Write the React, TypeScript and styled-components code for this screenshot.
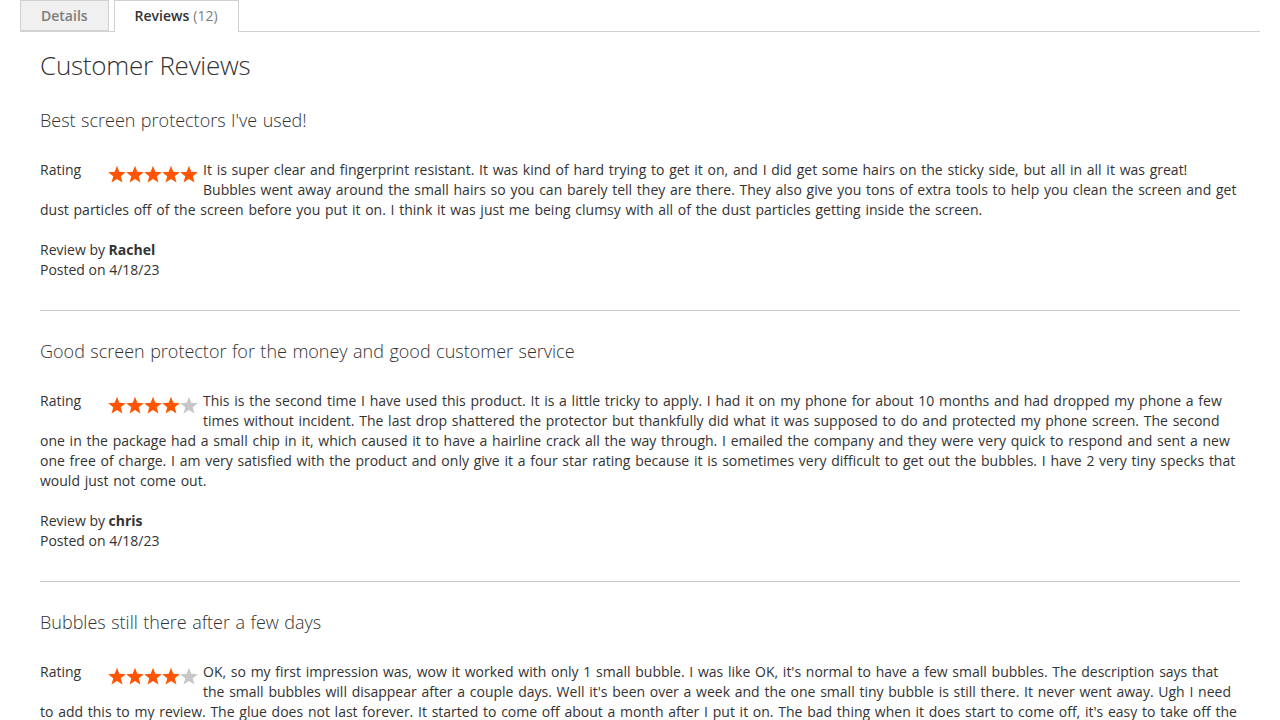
import React from "react";
import styled, { createGlobalStyle } from "styled-components";

const GlobalStyle = createGlobalStyle`
  html, body { margin: 0; padding: 0; background: #fff; }
  body {
    font-family: "Open Sans", "Helvetica Neue", Arial, sans-serif;
    font-size: 14px;
    line-height: 20px;
    color: #333;
  }
  * { box-sizing: border-box; }
`;

const Page = styled.div`
  width: 1280px;
  height: 720px;
  overflow: hidden;
`;

const TabBar = styled.div`
  display: flex;
  align-items: flex-end;
  gap: 5px;
  margin: 0 20px;
  height: 32px;
  border-bottom: 1px solid #d1d1d1;
`;

const Tab = styled.div<{ $active?: boolean }>`
  height: ${(p) => (p.$active ? "32px" : "31px")};
  margin-bottom: ${(p) => (p.$active ? "-1px" : "0")};
  padding: 0 20px;
  display: flex;
  align-items: center;
  padding-bottom: ${(p) => (p.$active ? "2px" : "0")};
  border: 1px solid #d1d1d1;
  border-bottom: ${(p) => (p.$active ? "none" : "1px solid #d1d1d1")};
  background: ${(p) => (p.$active ? "#fff" : "#f0f0f0")};
  color: ${(p) => (p.$active ? "#333" : "#7d7d7d")};
  font-weight: 600;
  font-size: 14px;
  white-space: nowrap;
`;

const Counter = styled.span`
  color: #7d7d7d;
  font-weight: 400;
  margin-left: 4px;
`;

const Content = styled.div`
  padding: 19px 40px 0;
`;

const Heading = styled.h2`
  margin: 0;
  font-size: 26px;
  line-height: 29px;
  font-weight: 300;
  letter-spacing: -0.25px;
  color: #333;
`;

const List = styled.ol`
  list-style: none;
  margin: 0;
  padding: 0;
`;

const Item = styled.li`
  padding: 30px 0;
  border-bottom: 1px solid #c9c9c9;
`;

const Title = styled.div`
  font-size: 18px;
  line-height: 20px;
  font-weight: 300;
  word-spacing: 0.8px;
  margin-bottom: 30px;
`;

const Body = styled.div`
  &::after { content: ""; display: block; clear: both; }
`;

const Ratings = styled.div`
  float: left;
  display: flex;
  align-items: flex-start;
  margin-right: 5px;
  margin-bottom: 8px;
`;

const RatingLabel = styled.span`
  width: 68px;
`;

const Stars = styled.svg`
  display: block;
  margin-top: 5px;
`;

const Text = styled.div`
  word-spacing: 1.1px;
`;

const Meta = styled.div`
  margin-top: 20px;
`;

const Author = styled.strong`
  font-weight: 700;
`;

function starPoints(cx: number, cy: number, R: number, r: number) {
  const pts: string[] = [];
  for (let i = 0; i < 10; i++) {
    const rad = i % 2 === 0 ? R : r;
    const a = ((-90 + i * 36) * Math.PI) / 180;
    pts.push(`${(cx + rad * Math.cos(a)).toFixed(2)},${(cy + rad * Math.sin(a)).toFixed(2)}`);
  }
  return pts.join(" ");
}

function StarRow({ value }: { value: number }) {
  return (
    <Stars width="90" height="19" viewBox="0 0 90 19">
      {[0, 1, 2, 3, 4].map((i) => (
        <polygon
          key={i}
          points={starPoints(9 + i * 18, 10, 9.3, 3.9)}
          fill={i < value ? "#ff5501" : "#c7c7c7"}
        />
      ))}
    </Stars>
  );
}

type Review = { title: string; rating: number; text: string; author: string; date: string };

const reviews: Review[] = [
  {
    title: "Best screen protectors I've used!",
    rating: 5,
    text:
      "It is super clear and fingerprint resistant. It was kind of hard trying to get it on, and I did get some hairs on the sticky side, but all in all it was great! Bubbles went away around the small hairs so you can barely tell they are there. They also give you tons of extra tools to help you clean the screen and get dust particles off of the screen before you put it on. I think it was just me being clumsy with all of the dust particles getting inside the screen.",
    author: "Rachel",
    date: "4/18/23",
  },
  {
    title: "Good screen protector for the money and good customer service",
    rating: 4,
    text:
      "This is the second time I have used this product. It is a little tricky to apply. I had it on my phone for about 10 months and had dropped my phone a few times without incident. The last drop shattered the protector but thankfully did what it was supposed to do and protected my phone screen. The second one in the package had a small chip in it, which caused it to have a hairline crack all the way through. I emailed the company and they were very quick to respond and sent a new one free of charge. I am very satisfied with the product and only give it a four star rating because it is sometimes very difficult to get out the bubbles. I have 2 very tiny specks that would just not come out.",
    author: "chris",
    date: "4/18/23",
  },
  {
    title: "Bubbles still there after a few days",
    rating: 4,
    text:
      "OK, so my first impression was, wow it worked with only 1 small bubble. I was like OK, it's normal to have a few small bubbles. The description says that the small bubbles will disappear after a couple days. Well it's been over a week and the one small tiny bubble is still there. It never went away. Ugh I need to add this to my review. The glue does not last forever. It started to come off about a month after I put it on. The bad thing when it does start to come off, it's easy to take off the screen protector and dust gets underneath it.",
    author: "Anonymous",
    date: "4/18/23",
  },
];

export default function App() {
  return (
    <Page>
      <GlobalStyle />
      <TabBar>
        <Tab>Details</Tab>
        <Tab $active>
          Reviews<Counter>(12)</Counter>
        </Tab>
      </TabBar>
      <Content>
        <Heading>Customer Reviews</Heading>
        <List>
          {reviews.map((r) => (
            <Item key={r.title}>
              <Title>{r.title}</Title>
              <Body>
                <Ratings>
                  <RatingLabel>Rating</RatingLabel>
                  <StarRow value={r.rating} />
                </Ratings>
                <Text>{r.text}</Text>
              </Body>
              <Meta>
                <div>
                  Review by <Author>{r.author}</Author>
                </div>
                <div>Posted on {r.date}</div>
              </Meta>
            </Item>
          ))}
        </List>
      </Content>
    </Page>
  );
}
